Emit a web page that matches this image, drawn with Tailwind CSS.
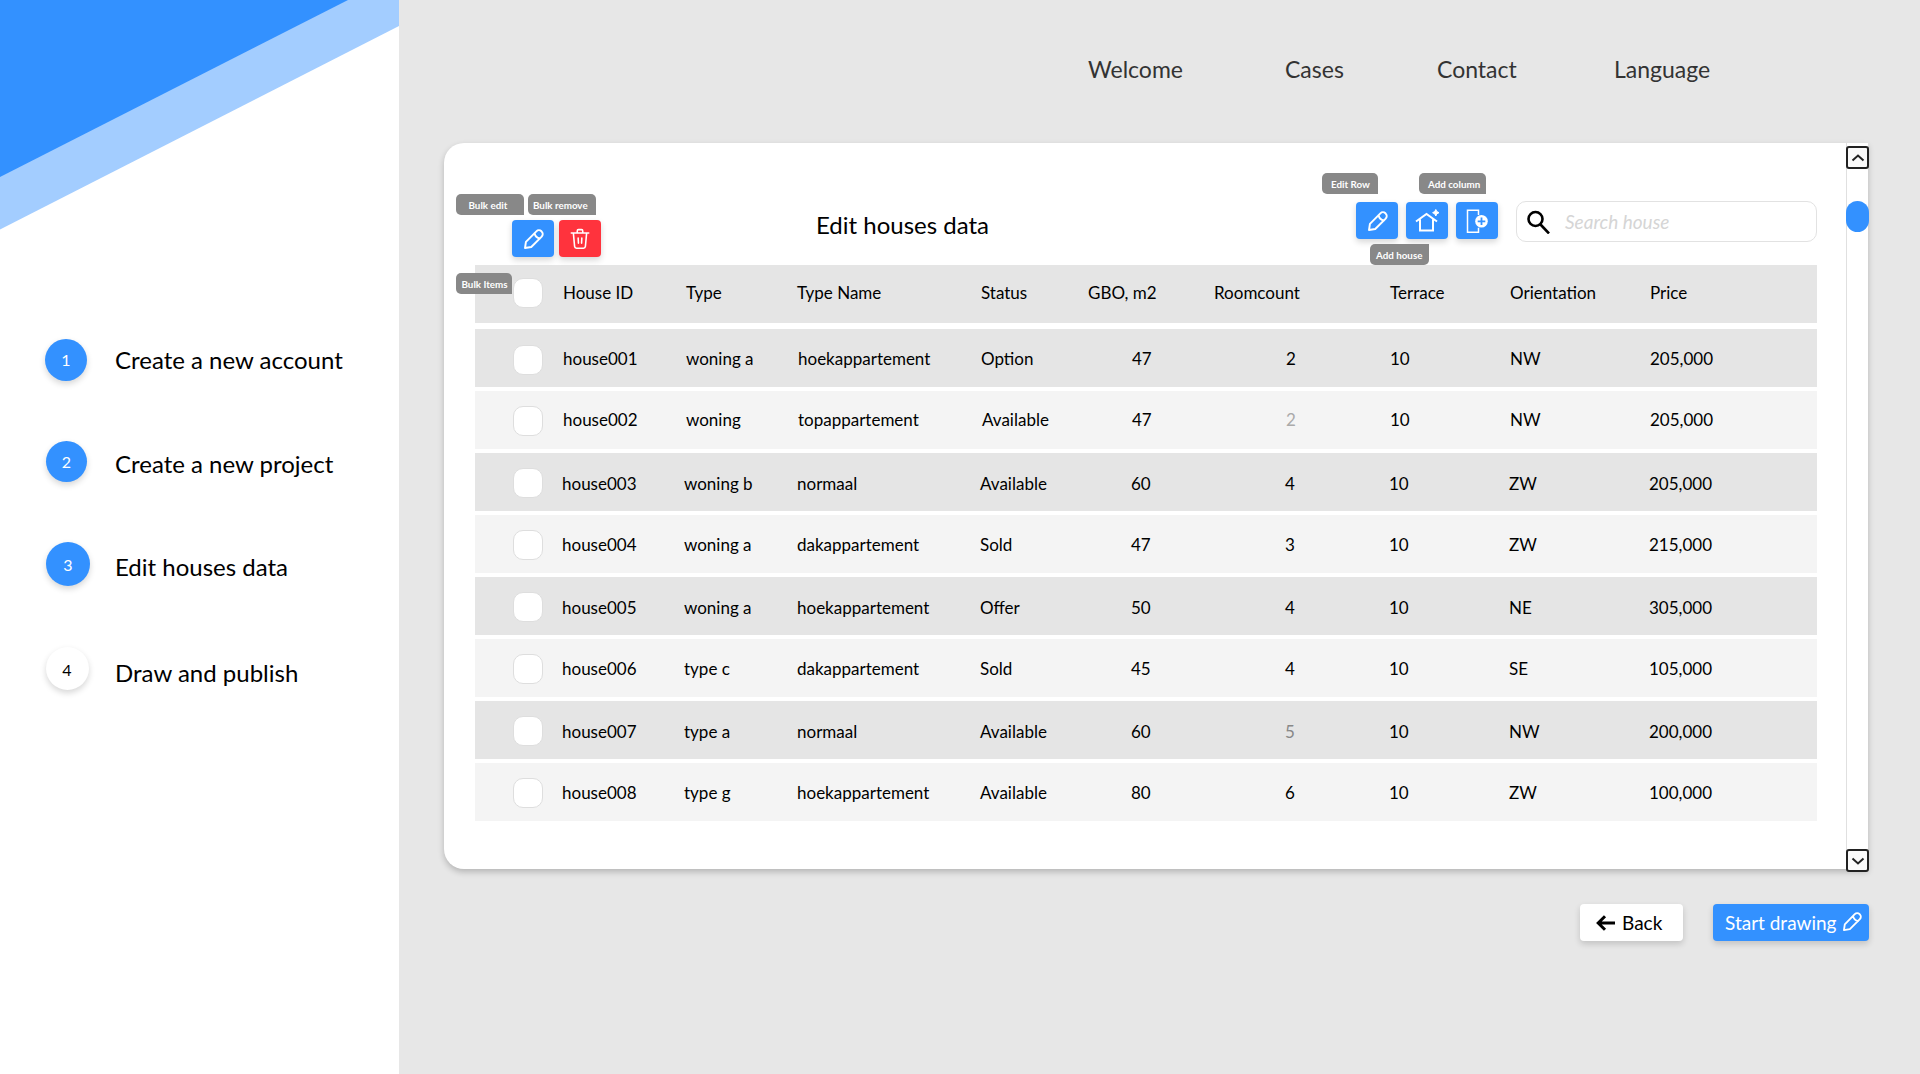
<!DOCTYPE html>
<html lang="en">
<head>
<meta charset="utf-8">
<title>Edit houses data</title>
<script src="https://cdn.jsdelivr.net/npm/@tailwindcss/browser@4"></script>
</head>
<body class="w-[1920px] h-[1074px] overflow-hidden bg-[#e7e7e7] font-['Lato',sans-serif] text-black flex">

<svg class="hidden">
  <symbol id="pencil" viewBox="0 0 24 24" fill="none" stroke="currentColor" stroke-width="2.100" stroke-linejoin="round" stroke-linecap="round">
    <path d="M2.200 21.800 3.200 15.200 14.600 3.600a3.900 3.900 0 0 1 5.500 0l.3.3a3.900 3.900 0 0 1 0 5.500L9 20.700ZM12.600 5.600c.6 3.200 2.700 5.300 5.900 5.900"/>
  </symbol>
</svg>

<aside class="relative w-[399px] h-full shrink-0 bg-white">
  <svg class="absolute left-0 top-0" width="399" height="230" viewBox="0 0 399 230">
    <path d="M0 0H399V26L0 229.500Z" fill="#a3cdff"/>
    <path d="M0 0H348L0 177Z" fill="#3391ff"/>
  </svg>
  <ol class="flex flex-col pt-[339px] pl-[45px] text-2xl leading-[42px]">
    <li class="flex items-start h-[102px]"><span class="flex items-center justify-center size-[42px] rounded-full bg-[#3391ff] text-white text-base shadow-[0_3px_6px_rgba(0,0,0,0.16)]">1</span><span class="ml-7">Create a new account</span></li>
    <li class="flex items-start h-[101px]"><span class="ml-px flex items-center justify-center size-[41px] rounded-full bg-[#3391ff] text-white text-base shadow-[0_3px_6px_rgba(0,0,0,0.16)]">2</span><span class="ml-7 pt-0.5">Create a new project</span></li>
    <li class="flex items-start h-[105px]"><span class="ml-px flex items-center justify-center size-[44px] rounded-full bg-[#3391ff] text-white text-base shadow-[0_3px_6px_rgba(0,0,0,0.16)]"><span class="pt-px">3</span></span><span class="ml-[25px] pt-1">Edit houses data</span></li>
    <li class="flex items-start"><span class="ml-px flex items-center justify-center size-[43px] rounded-full bg-white text-base shadow-[0_3px_6px_rgba(0,0,0,0.16)]"><span class="pt-[3px] pr-px">4</span></span><span class="ml-[26px] pt-[5px]">Draw and publish</span></li>
  </ol>
</aside>

<main class="flex-1 flex flex-col">
  <nav class="flex h-[143px] pt-[55px] pl-[689px] text-[23px] leading-7 text-[#333]">
    <a class="w-[197px]">Welcome</a><a class="w-[152px]">Cases</a><a class="w-[177px]">Contact</a><a>Language</a>
  </nav>

  <section class="flex ml-[45px] w-[1424px] h-[726px] rounded-l-[20px] bg-white shadow-[0_3px_6px_rgba(0,0,0,0.22)]">
    <div class="w-[1402px] pl-[31px]">
      <header class="relative flex h-[122px]">
        <div class="flex gap-[5px] pt-[77px] pl-[37px]">
          <button class="flex items-center justify-center w-[42px] h-[37px] rounded bg-[#3391ff] text-white shadow-[0_3px_6px_rgba(0,0,0,0.16)]"><svg class="ml-px size-[22px]"><use href="#pencil"/></svg></button>
          <button class="flex items-center justify-center w-[42px] h-[37px] rounded bg-[#ff333d] text-white shadow-[0_3px_6px_rgba(0,0,0,0.16)]">
            <svg class="size-[22px]" viewBox="0 0 24 24" fill="none" stroke="currentColor" stroke-width="1.700" stroke-linecap="round" stroke-linejoin="round"><path d="M2.500 5.500h19M9 5.200V3.200Q9 1.800 10.300 1.800h3.400Q15 1.800 15 3.200v2M4.800 5.800l1.300 14.300Q6.300 22 8.200 22h7.600q1.900 0 2.100-1.900L19.200 5.800M10 11l.3 5.500M14 11l-.3 5.500"/></svg>
          </button>
        </div>
        <h1 class="ml-[215px] pt-[65px] text-2xl leading-[34px]">Edit houses data</h1>
        <div class="ml-auto mr-[29px] flex pt-[59px]">
          <div class="flex gap-2">
            <button class="flex items-center justify-center w-[42px] h-[37px] rounded bg-[#3391ff] text-white shadow-[0_3px_6px_rgba(0,0,0,0.16)]"><svg class="ml-px size-[22px]"><use href="#pencil"/></svg></button>
            <button class="flex items-center justify-center w-[42px] h-[37px] rounded bg-[#3391ff] text-white shadow-[0_3px_6px_rgba(0,0,0,0.16)]">
              <svg class="size-[24px]" viewBox="0 0 24 24" fill="none" stroke="currentColor" stroke-width="2"><path d="M1 12.500 11.500 5 22 12.500M5 10.500V21.500h13V10.500"/><path d="m20.800 .5 1 2 2.200 1.200-2.200 1.200-1 2.100-1-2.100-2.200-1.200 2.200-1.200Z" fill="currentColor" stroke-width="1"/></svg>
            </button>
            <button class="flex items-center justify-center w-[42px] h-[37px] rounded bg-[#3391ff] text-white shadow-[0_3px_6px_rgba(0,0,0,0.16)]">
              <svg class="size-[24px]" viewBox="0 0 24 24" fill="none" stroke="currentColor" stroke-width="1.500"><path d="M13.500 6V1.200H2.500v22h11v-4.500"/><circle cx="16.500" cy="12.300" r="6.300" fill="currentColor" stroke="none"/><path d="M16.500 8.500v7.600M12.700 12.300h7.600" stroke="#3391ff" stroke-width="1.800"/></svg>
            </button>
          </div>
          <label class="ml-[18px] -mt-px flex items-center w-[301px] h-[41px] rounded-[10px] border border-[#e2e2e2] pl-[10px]">
            <svg class="size-[24px]" viewBox="0 0 24 24" fill="none" stroke="#000" stroke-width="2.600"><circle cx="8.500" cy="9" r="7"/><path d="m13.500 14.500 8.500 9"/></svg>
            <span class="ml-[14px] pt-px text-[19px] italic text-[#d5d5d5]">Search house</span>
          </label>
        </div>
        <span class="absolute left-[-19px] top-[51px] w-[68px] h-[21px] rounded-[5px] rounded-br-none bg-[#888] text-white text-[9.800px] leading-[23px] font-bold pl-[12.500px]">Bulk edit</span>
        <span class="absolute left-[53px] top-[51px] w-[68px] h-[21px] rounded-[5px] rounded-br-none bg-[#888] text-white text-[9.800px] leading-[23px] font-bold pl-[5px]">Bulk remove</span>
        <span class="absolute left-[-19px] top-[130px] z-10 w-[56px] h-[21px] rounded-[5px] rounded-br-none bg-[#888] text-white text-[9.800px] leading-[23px] font-bold pl-[5.500px]">Bulk Items</span>
        <span class="absolute left-[847px] top-[30px] w-[56px] h-[21px] rounded-[5px] rounded-br-none bg-[#888] text-white text-[9.800px] leading-[23px] font-bold pl-[9px]">Edit Row</span>
        <span class="absolute left-[944px] top-[30px] w-[67px] h-[21px] rounded-[5px] rounded-br-none bg-[#888] text-white text-[9.800px] leading-[23px] font-bold pl-[9px]">Add column</span>
        <span class="absolute left-[895px] top-[101px] w-[59px] h-[21px] rounded-[5px] rounded-tr-none bg-[#888] text-white text-[9.800px] leading-[23px] font-bold pl-[6px]">Add house</span>
      </header>
      <div id="rows" class="w-[1342px] flex flex-col gap-1 text-[17px] leading-6"></div>
    </div>

    <div class="relative flex flex-col items-center justify-between w-[22px] border-l border-[#e0e0e0] pt-[3px]">
      <button class="flex items-center justify-center w-[23px] h-[23px] rounded-[3px] border-2 border-[#222] bg-[#fafafa]"><svg class="size-[14px]" viewBox="0 0 14 14" fill="none" stroke="#222" stroke-width="2"><path d="m1.500 9.500 5.500-5 5.500 5"/></svg></button>
      <span class="absolute left-[-1px] top-[58px] w-[23px] h-[31px] rounded-full bg-[#3391ff]"></span>
      <button class="-mb-[3px] flex items-center justify-center w-[23px] h-[23px] rounded-[3px] border-2 border-[#222] bg-[#fafafa]"><svg class="size-[14px]" viewBox="0 0 14 14" fill="none" stroke="#222" stroke-width="2"><path d="m1.500 4.500 5.500 5 5.500-5"/></svg></button>
    </div>
  </section>

  <footer class="flex justify-end gap-[30px] pt-[35px] pr-[51px] text-[19px]">
    <button class="flex items-center w-[103px] h-[37px] rounded bg-white pl-4 shadow-[0_3px_6px_rgba(0,0,0,0.16)]">
      <svg class="w-[19px] h-[16px]" viewBox="0 0 19 16" fill="none" stroke="#000" stroke-width="3"><path d="M19 8H2.500M9 1.200 2.200 8 9 14.800"/></svg>
      <span class="ml-[7px] pt-0.5">Back</span>
    </button>
    <button class="flex items-center w-[156px] h-[37px] rounded bg-[#3391ff] pl-3 text-white shadow-[0_3px_6px_rgba(0,0,0,0.16)]">
      <span class="whitespace-nowrap pt-0.5">Start drawing</span><svg class="ml-[6px] -mt-0.5 size-[21px] shrink-0"><use href="#pencil"/></svg>
    </button>
  </footer>
</main>

<script>
const head = ['House ID','Type','Type Name','Status','GBO, m2','Roomcount','Terrace','Orientation','Price'];
const data = [
  ['house001','woning a','hoekappartement','Option','47','2','10','NW','205,000'],
  ['house002','woning','topappartement','Available','47','2','10','NW','205,000'],
  ['house003','woning b','normaal','Available','60','4','10','ZW','205,000'],
  ['house004','woning a','dakappartement','Sold','47','3','10','ZW','215,000'],
  ['house005','woning a','hoekappartement','Offer','50','4','10','NE','305,000'],
  ['house006','type c','dakappartement','Sold','45','4','10','SE','105,000'],
  ['house007','type a','normaal','Available','60','5','10','NW','200,000'],
  ['house008','type g','hoekappartement','Available','80','6','10','ZW','100,000']
];
const grid = 'grid grid-cols-[88px_123px_111px_184px_107px_126px_176px_120px_140px_1fr] h-[58px] items-start';
const box = '<span class="ml-[38px] SHIFT size-[30px] rounded-[10px] border border-[#dedede] bg-white"></span>';
let html = `<div class="${grid} bg-[#e5e5e5] pt-[16px] mb-0.5">${box.replace('SHIFT','-mt-[3px]')}${head.map(h => `<span class="whitespace-nowrap">${h}</span>`).join('')}</div>`;
data.forEach((r, i) => {
  const bg = i % 2 ? 'bg-[#f4f4f4]' : 'bg-[#e5e5e5]';
  const pad = i === 0 ? 'pt-[18px]' : i === 1 ? 'pt-[17px]' : i % 2 ? 'pt-[18px]' : 'pt-[19px]';
  const shift = i < 2 ? '-mt-[2px]' : i % 2 ? '-mt-[3px]' : '-mt-[4px]';
  html += `<div class="${grid} ${bg} ${pad}">${box.replace('SHIFT', shift)}` + r.map((c, j) => {
    const left = i > 1 ? (j === 1 ? '-ml-0.5' : j === 2 ? '' : '-ml-px') : j === 2 || (i === 1 && j === 3) ? 'ml-px' : '';
    const off = j === 4 ? 'pl-[44px]' : j === 5 ? 'pl-[72px]' : '';
    const dim = j === 5 && i === 1 ? 'text-[#aaa]' : j === 5 && i === 6 ? 'text-[#888]' : '';
    return `<span class="${left} ${off} ${dim}">${c}</span>`;
  }).join('') + '</div>';
});
document.getElementById('rows').innerHTML = html;
</script>
</body>
</html>
